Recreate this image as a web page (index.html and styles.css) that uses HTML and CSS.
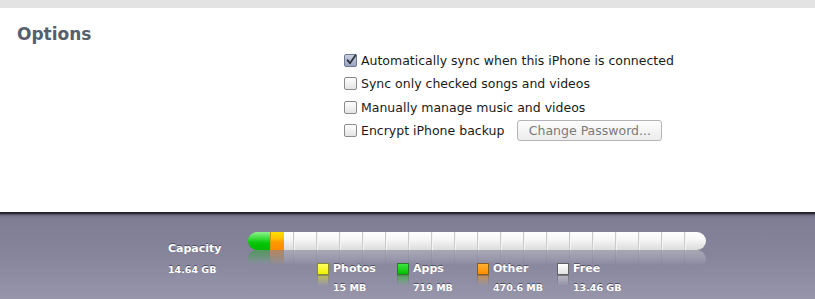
FILE: index.html
```html
<!DOCTYPE html>
<html>
<head>
<meta charset="utf-8">
<link rel="stylesheet" href="styles.css">
</head>
<body>
<div class="topbar"></div>
<section class="options">
  <h2 class="title">Options</h2>
  <ul class="opt-list">
    <li class="opt"><span class="cb checked"><svg viewBox="0 0 12 12" width="12" height="12"><path d="M2.5 6.2 L5 9.2 L10.5 1.2" fill="none" stroke="#2d3340" stroke-width="1.8" stroke-linecap="round" stroke-linejoin="round"/></svg></span><span>Automatically sync when this iPhone is connected</span></li>
    <li class="opt"><span class="cb"></span><span>Sync only checked songs and videos</span></li>
    <li class="opt"><span class="cb"></span><span>Manually manage music and videos</span></li>
    <li class="opt"><span class="cb"></span><span>Encrypt iPhone backup</span><button class="btn">Change Password...</button></li>
  </ul>
</section>
<section class="capacity">
  <div class="cap-label">
    <div class="cap-title">Capacity</div>
    <div class="cap-size">14.64 GB</div>
  </div>
  <div class="cap-main">
    <div class="bar">
      <div class="seg apps"></div>
      <div class="seg other"></div>
      <div class="seg free"></div>
    </div>
    <div class="legend">
      <div class="item"><span class="sw sw-photos"></span><div><div class="name">Photos</div><div class="size">15 MB</div></div></div>
      <div class="item"><span class="sw sw-apps"></span><div><div class="name">Apps</div><div class="size">719 MB</div></div></div>
      <div class="item"><span class="sw sw-other"></span><div><div class="name">Other</div><div class="size">470.6 MB</div></div></div>
      <div class="item"><span class="sw sw-free"></span><div><div class="name">Free</div><div class="size">13.46 GB</div></div></div>
    </div>
  </div>
</section>
</body>
</html>
```
FILE: styles.css
```css
html, body {
  margin: 0;
  padding: 0;
  width: 815px;
  height: 299px;
  overflow: hidden;
  background: #fff;
  font-family: "DejaVu Sans", "Liberation Sans", sans-serif;
}
.topbar {
  height: 8px;
  background: #e3e3e3;
}
.options {
  height: 204px;
  box-sizing: border-box;
  padding-top: 15px;
}
.title {
  margin: 0 0 0 17px;
  font-size: 17px;
  font-weight: bold;
  color: #56606d;
  line-height: 22px;
}
.opt-list {
  list-style: none;
  margin: 5px 0 0 344px;
  padding: 0;
  display: flex;
  flex-direction: column;
  gap: 3px;
}
.opt {
  display: flex;
  align-items: center;
  height: 20.5px;
  font-size: 12.5px;
  color: #1a1a1a;
}
.cb {
  width: 11px;
  height: 11px;
  border: 1px solid #8c8c8c;
  border-radius: 2px;
  background: linear-gradient(#ffffff, #e4e4e4);
  margin-right: 4px;
  flex: none;
  position: relative;
}
.cb.checked {
  background: linear-gradient(#c9cfdf, #9aa4c0);
  border-color: #6f7891;
}
.cb svg {
  position: absolute;
  left: 0;
  top: -1px;
}
.btn {
  margin-left: 13px;
  width: 145px;
  height: 21px;
  border: 1px solid #b4b4b4;
  border-radius: 3px;
  background: linear-gradient(#fdfdfd, #ececec);
  color: #7a7a7a;
  font-family: inherit;
  font-size: 12.5px;
  padding: 0;
}
.capacity {
  height: 87px;
  box-sizing: border-box;
  border-top: 2px solid #26262e;
  background: linear-gradient(#4d4b5c 0, #76748b 2px, #807e96 5px, #86849b 40px, #9795aa 100%);
  display: flex;
  padding: 18px 0 0 168px;
  color: #fff;
  text-shadow: 0 -1px 0 rgba(40, 38, 55, 0.6);
  font-weight: bold;
}
.cap-label {
  width: 80px;
  padding-top: 10px;
}
.cap-title {
  font-size: 11px;
  line-height: 14px;
}
.cap-size {
  font-size: 9.5px;
  line-height: 14px;
  margin-top: 7px;
}
.bar {
  width: 458px;
  height: 18px;
  border-radius: 9px;
  overflow: hidden;
  display: flex;
  box-shadow: inset 0 -1px 0 rgba(0,0,0,0.15);
  -webkit-box-reflect: below 0px linear-gradient(transparent 15%, rgba(255,255,255,0.4));
}
.seg { height: 100%; }
.apps {
  width: 22px;
  background: linear-gradient(#8cf28c 0%, #3fdc3f 35%, #06c606 60%, #02b802 100%);
}
.other {
  width: 13px;
  background: linear-gradient(#ffe000 0%, #ffc400 35%, #ff9a00 55%, #ff8a00 100%);
  border-left: 1px solid #d59a00;
}
.free {
  flex: 1;
  background:
    repeating-linear-gradient(90deg, transparent 0, transparent 9px, #cacaca 9px, #cacaca 10px, #f4f4f4 10px, #f4f4f4 11px, transparent 11px, transparent 23px),
    linear-gradient(#ffffff 0%, #f7f7f7 40%, #e9e9e9 70%, #dcdcdc 100%);
}
.legend {
  display: grid;
  grid-template-columns: repeat(4, 80px);
  margin: 13px 0 0 69px;
}
.item {
  display: flex;
  align-items: flex-start;
}
.sw {
  width: 10px;
  height: 10px;
  border: 1px solid rgba(60,60,60,0.75);
  margin: 0 4px 0 0;
  flex: none;
  -webkit-box-reflect: below 0px linear-gradient(transparent 10%, rgba(255,255,255,0.5));
}
.sw-photos { background: linear-gradient(#ffff60, #f0f000); border-color: #8a8a30; }
.sw-apps { background: linear-gradient(#3ee63e, #00c000); border-color: #2a7a2a; }
.sw-other { background: linear-gradient(#ffb030, #ff8c00); border-color: #8a5a20; }
.sw-free { background: linear-gradient(#ffffff, #e2e2e2); border-color: #606060; }
.name {
  font-size: 11px;
  line-height: 12px;
}
.size {
  font-size: 9.5px;
  line-height: 12px;
  margin-top: 7px;
}
```
